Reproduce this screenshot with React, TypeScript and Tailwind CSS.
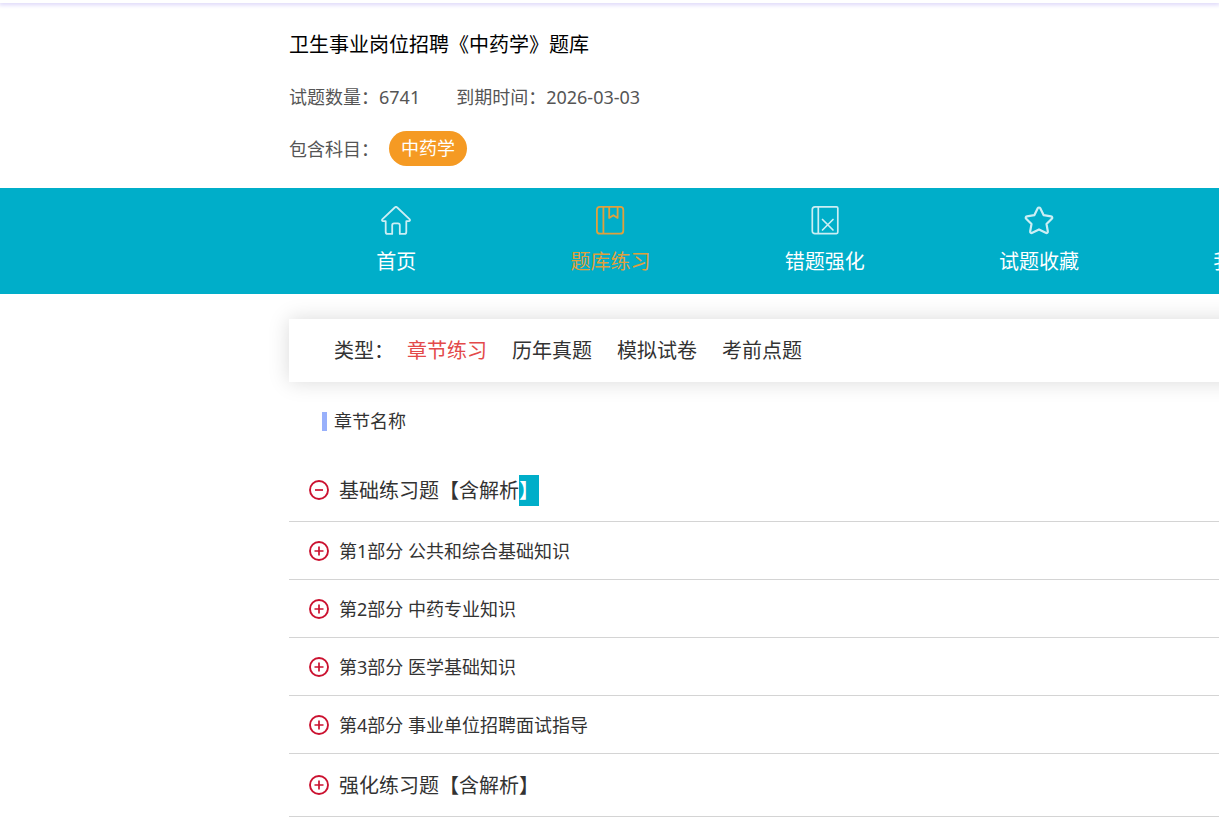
import React from 'react';
import clsx from 'clsx';

interface IconProps {
    className?: string;
}

interface NavItem {
    label: string;
    icon: React.FC<IconProps>;
}

interface Chapter {
    name: string;
    level: 'group' | 'part';
    expanded?: boolean;
    // trailing characters shown as selected
    marked?: string;
}

const HomeIcon: React.FC<IconProps> = ({ className }) => (
    <svg viewBox="0 0 32 32" className={className} fill="none" stroke="currentColor" strokeWidth="1.8" strokeLinejoin="round" strokeLinecap="round" aria-hidden="true">
        <path d="M14.800 3.500 2.500 15.200c-.9.9-.5 2 .7 2h2.500v10.700c0 1.300.7 2 2 2h4.500v-8.700c0-1.200.7-1.900 1.900-1.900h3.800c1.200 0 1.900.7 1.900 1.900v8.700h4.500c1.300 0 2-.7 2-2V17.200h2.500c1.200 0 1.600-1.100.7-2L17.200 3.500c-.7-.7-1.700-.7-2.400 0Z" />
    </svg>
);

const BookIcon: React.FC<IconProps> = ({ className }) => (
    <svg viewBox="0 0 32 32" className={className} fill="none" stroke="currentColor" strokeWidth="1.8" strokeLinejoin="round" aria-hidden="true">
        <rect x="2.900" y="2.900" width="26.400" height="26.800" rx="3" />
        <path d="M9.400 2.900v26.800M15.200 2.900v11l4.200-2.700 4.200 2.700v-11" />
    </svg>
);

const WrongBookIcon: React.FC<IconProps> = ({ className }) => (
    <svg viewBox="0 0 32 32" className={className} fill="none" stroke="currentColor" strokeWidth="1.7" strokeLinejoin="round" aria-hidden="true">
        <path d="M6 2.800h21.500c.9 0 1.300.5 1.300 1.300v24.200c0 .9-.5 1.300-1.300 1.300H6c-1.700 0-2.700-1-2.700-2.700V5.500c0-1.700 1-2.700 2.700-2.700ZM9.300 2.800v26.800" />
        <path d="m13.500 15.500 10.500 10.500m0-10.500L13.500 26" strokeLinecap="round" />
    </svg>
);

const StarIcon: React.FC<IconProps> = ({ className }) => (
    <svg viewBox="0 0 32 32" className={className} fill="none" stroke="currentColor" strokeWidth="2.2" strokeLinejoin="round" aria-hidden="true">
        <path d="M14.700 4.300c.6-1.100 2-1.100 2.600 0l3.400 6.900 7.300 1.100c1.300.2 1.700 1.600.8 2.500l-5.300 5.200 1.300 7.300c.2 1.300-1 2.100-2.100 1.500L16 25.400l-6.700 3.400c-1.100.6-2.300-.2-2.100-1.500L8.500 20l-5.300-5.200c-.9-.9-.5-2.300.8-2.500l7.300-1.100Z" />
    </svg>
);

const NoteIcon: React.FC<IconProps> = ({ className }) => (
    <svg viewBox="0 0 32 32" className={className} fill="none" stroke="currentColor" strokeWidth="1.8" strokeLinejoin="round" aria-hidden="true">
        <rect x="4" y="3" width="24" height="26" rx="2" />
        <path d="M10 11h12M10 17h12M10 23h7" />
    </svg>
);

const ToggleIcon: React.FC<{ expanded: boolean }> = ({ expanded }) => (
    <svg viewBox="0 0 20 20" className="h-5 w-5 shrink-0 text-[#cb1230]" fill="none" stroke="currentColor" aria-hidden="true">
        <circle cx="10" cy="10" r="9" strokeWidth="1.9" />
        <path d={expanded ? 'M6 10h8' : 'M5.500 10h9M10 5.500v9'} strokeWidth="1.7" />
    </svg>
);

const NAV_ITEMS: NavItem[] = [
    { label: '首页', icon: HomeIcon },
    { label: '题库练习', icon: BookIcon },
    { label: '错题强化', icon: WrongBookIcon },
    { label: '试题收藏', icon: StarIcon },
    { label: '我的笔记', icon: NoteIcon },
];

const TYPES = ['章节练习', '历年真题', '模拟试卷', '考前点题'];

const CHAPTERS: Chapter[] = [
    { name: '基础练习题【含解析', marked: '】', level: 'group', expanded: true },
    { name: '第1部分 公共和综合基础知识', level: 'part' },
    { name: '第2部分 中药专业知识', level: 'part' },
    { name: '第3部分 医学基础知识', level: 'part' },
    { name: '第4部分 事业单位招聘面试指导', level: 'part' },
    { name: '强化练习题【含解析】', level: 'group' },
];

const BankHeader: React.FC = () => (
    <header className="pt-[27px] pb-[22px] pl-[289px] text-lg text-[#555]">
        <h1 className="text-xl leading-[30px] text-black">卫生事业岗位招聘《中药学》题库</h1>
        <div className="mt-[23px] flex gap-9 leading-7">
            <p>试题数量：6741</p>
            <p>到期时间：2026-03-03</p>
        </div>
        <div className="mt-5 flex items-center gap-[10px]">
            <span>包含科目：</span>
            <button type="button" className="h-[35px] rounded-full bg-[#f59a23] px-3 leading-[35px] text-white">
                中药学
            </button>
        </div>
    </header>
);

const MainNav: React.FC<{ active: string }> = ({ active }) => (
    <nav className="overflow-hidden bg-[#00aec9] pl-[289px]">
        <div className="grid min-w-[1500px] grid-cols-7">
            {NAV_ITEMS.map(({ label, icon: Icon }) => (
                <a
                    key={label}
                    href="#"
                    className={clsx(
                        'flex flex-col items-center gap-[11px] pt-4 pb-[17px] text-xl leading-[30px]',
                        label === active ? 'text-[#e0a03c]' : 'text-white'
                    )}
                >
                    <Icon className={clsx('h-8 w-8', label !== active && 'opacity-80')} />
                    {label}
                </a>
            ))}
        </div>
    </nav>
);

const TypeFilter: React.FC<{ value: string; onChange: (type: string) => void }> = ({ value, onChange }) => (
    <div className="-mr-6 flex gap-[25px] bg-white pt-[17px] pb-4 pl-[45px] text-xl leading-[30px] shadow-[0_0_20px_rgba(0,0,0,0.15)]">
        <span className="-mr-3">类型：</span>
        {TYPES.map(type => (
            <button
                key={type}
                type="button"
                onClick={() => onChange(type)}
                className={clsx('cursor-pointer', type === value && 'text-[#e34a4a]')}
            >
                {type}
            </button>
        ))}
    </div>
);

const ChapterRow: React.FC<{ chapter: Chapter }> = ({ chapter }) => {
    const { name, marked, level, expanded = false } = chapter;
    return (
        <li className="border-b border-[#d4d4d4]">
            <button
                type="button"
                aria-expanded={expanded}
                className={clsx(
                    'flex w-full cursor-pointer items-center gap-[10px] pl-5 text-left',
                    level === 'group' ? 'h-[62px] text-xl leading-[31px]' : 'h-[57px] text-lg leading-7'
                )}
            >
                <ToggleIcon expanded={expanded} />
                <span>
                    {name}
                    {marked && <mark className="inline-block bg-[#00aec9] text-white">{marked}</mark>}
                </span>
            </button>
        </li>
    );
};

export default function App() {
    const [type, setType] = React.useState(TYPES[0]);

    return (
        <div className="overflow-hidden bg-white font-['Noto_Sans','Noto_Sans_CJK_SC',sans-serif] text-[#333]" lang="zh-CN">
            <div className="h-[3px] shadow-[0_1px_4px_1px_#dcd6fa]" />
            <BankHeader />
            <MainNav active="题库练习" />
            <main className="pt-[25px] pl-[289px]">
                <TypeFilter value={type} onChange={setType} />
                <h2 className="mt-[25px] flex items-center gap-[7px] pl-[33px] text-lg leading-7">
                    <span className="h-[19px] w-[5px] bg-[#98b0fb]" />
                    章节名称
                </h2>
                <ul className="mt-6">
                    {CHAPTERS.map(chapter => (
                        <ChapterRow key={chapter.name} chapter={chapter} />
                    ))}
                </ul>
            </main>
        </div>
    );
}
